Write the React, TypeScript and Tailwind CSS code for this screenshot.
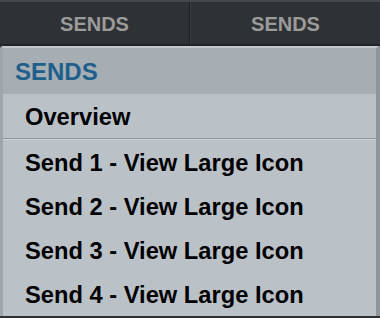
const font = { fontFamily: '"Liberation Sans", Arial, Helvetica, sans-serif' }

const items = [
  'Send 1 - View Large Icon',
  'Send 2 - View Large Icon',
  'Send 3 - View Large Icon',
  'Send 4 - View Large Icon',
]

export default function App() {
  return (
    <div className="h-[318px] w-[380px] overflow-hidden bg-[#2f3235]" style={font}>
      {/* Tab strip */}
      <div className="flex h-[46px] border-t-2 border-b-2 border-t-[#45484b] border-b-[#222527]">
        <div className="flex flex-1 items-center justify-center border-r border-r-[#1e2123] pt-[2px] text-[20px] font-bold text-[#9b9b9b]">
          SENDS
        </div>
        <div className="flex flex-1 items-center justify-center border-l border-l-[#3a3d40] pt-[2px] text-[20px] font-bold text-[#9b9b9b]">
          SENDS
        </div>
      </div>

      {/* Dropdown menu */}
      <div className="rounded-tl-[3px] border-t-2 border-l-[3px] border-r-[4px] border-t-[#c3cbd0] border-l-[#9ea6ac] border-r-[#8e969c] bg-[#bac2c8]">
        <div className="flex h-[46px] items-center bg-[#a6aeb4] pl-[12px] pt-[1px] text-[24px] font-bold text-[#1f5f8b]">
          SENDS
        </div>
        <div className="flex h-[44px] items-center pl-[22px] pt-[3px] text-[23.7px] font-bold text-black">
          Overview
        </div>
        <div className="h-[2px] border-t border-t-[#8f979d] border-b border-b-[#cdd4d8]" />
        {items.map((label) => (
          <div
            key={label}
            className="flex h-[44px] items-center pl-[22px] pt-[3px] text-[23.7px] font-bold text-black"
          >
            {label}
          </div>
        ))}
      </div>
    </div>
  )
}
